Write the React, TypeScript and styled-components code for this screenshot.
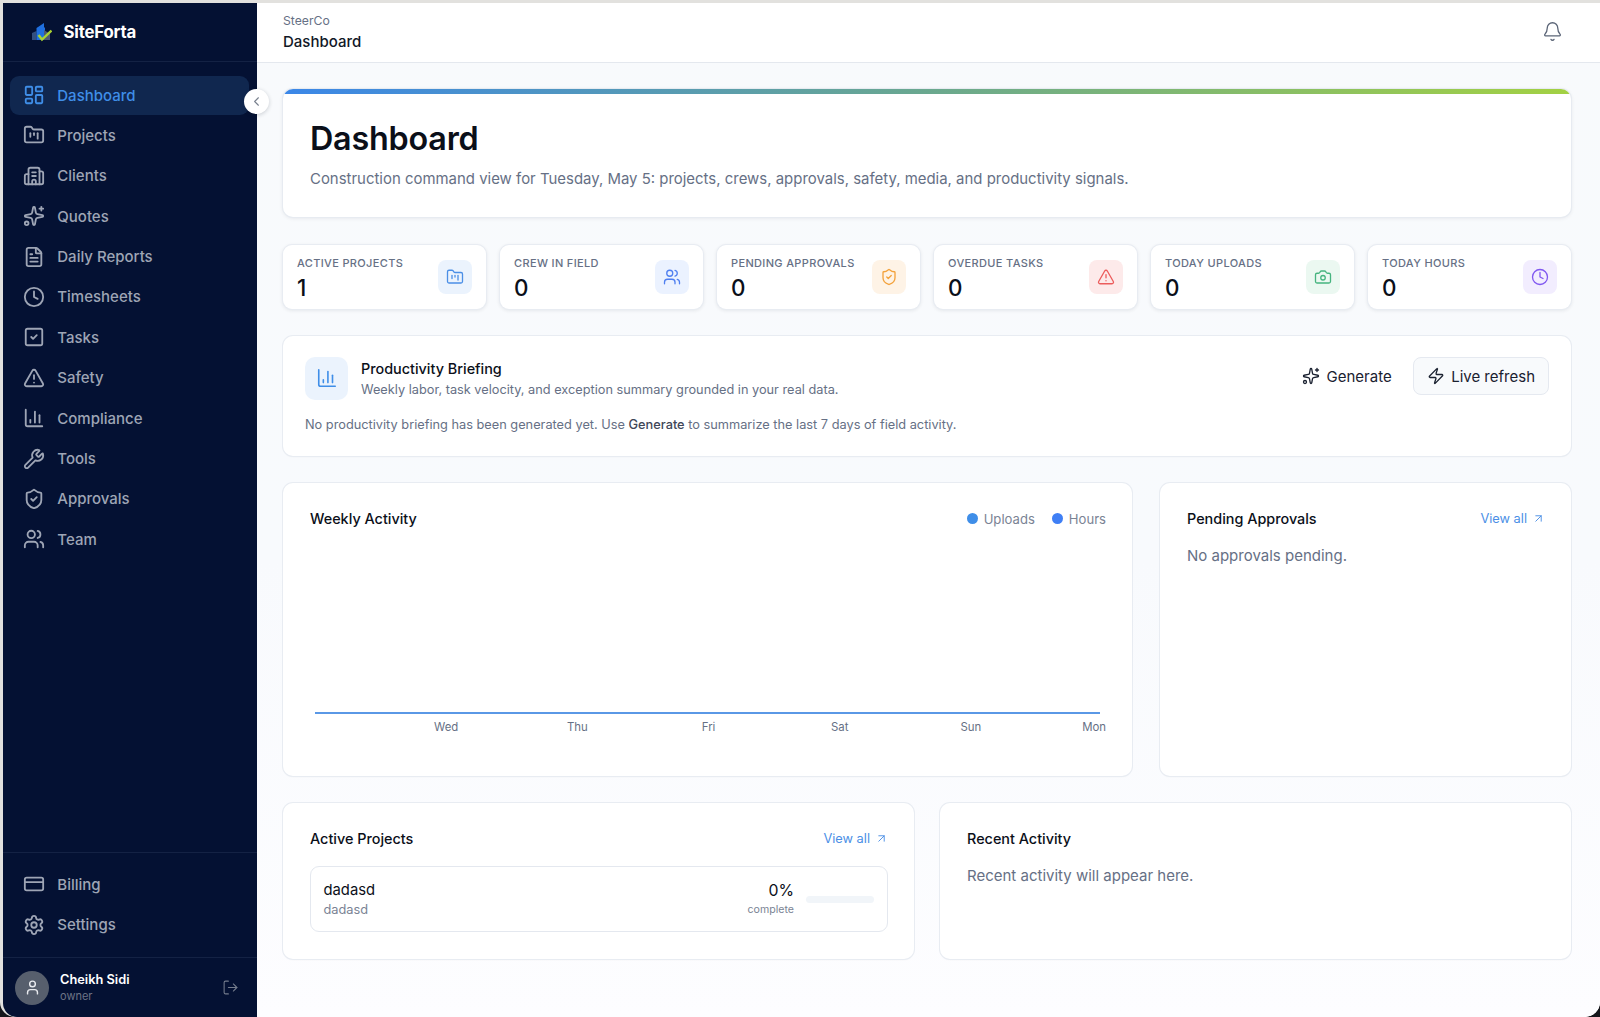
import React from "react";
import styled, { createGlobalStyle } from "styled-components";
import {
  LayoutDashboard, FolderKanban, Building2, Sparkles, FileText, Clock, SquareCheck,
  TriangleAlert, ChartColumn, Wrench, ShieldCheck, Users, CreditCard, Settings,
  LogOut, Bell, ChevronLeft, Camera, Zap, ArrowUpRight, User, LucideIcon,
} from "lucide-react";

const Global = createGlobalStyle`
  html, body { margin: 0; padding: 0; height: 100%; background: #15171c; }
  #root { height: 100%; }
  * { box-sizing: border-box; }
  body { font-family: Inter, "Noto Sans", "Liberation Sans", sans-serif; -webkit-font-smoothing: antialiased; }
`;

const Frame = styled.div`
  width: 1600px; height: 1017px; padding: 3px 0 0 3px; overflow: hidden;
  background: #e2e1de; border-radius: 0 0 15px 15px;
`;
const Shell = styled.div`
  display: flex; width: 100%; height: 100%; background: #fff;
  border-radius: 0 0 15px 14px; overflow: hidden; position: relative;
`;
const Sidebar = styled.aside`
  width: 254px; flex: none; background: #041133; display: flex; flex-direction: column; position: relative;
`;
const Brand = styled.div`
  height: 59px; flex: none; display: flex; align-items: center; gap: 11.5px; padding-left: 29px;
  border-bottom: 1px solid #142244;
`;
const BrandName = styled.span`
  color: #fff; font-size: 16.8px; font-weight: 700; letter-spacing: -0.2px;
`;
const NavList = styled.nav`
  flex: 1; display: flex; flex-direction: column; gap: 1.4px; padding: 13.5px 8px 0 7px;
`;
const NavItem = styled.div<{ $active?: boolean }>`
  height: 39px; flex: none; display: flex; align-items: center; gap: 12.8px; padding-left: 12.5px;
  border-radius: 9px; font-size: 15px; font-weight: 500;
  color: ${(p) => (p.$active ? "#3f8ee8" : "#9ea5b5")};
  background: ${(p) => (p.$active ? "#10274f" : "transparent")};
`;
const Collapse = styled.button`
  position: absolute; left: 241px; top: 86px; width: 25px; height: 25px; padding: 0; border: 0; border-radius: 50%;
  background: #fff; box-shadow: 0 1px 4px rgba(15, 23, 42, 0.2); color: #7a828f; z-index: 3;
  display: flex; align-items: center; justify-content: center;
`;
const NavFooter = styled.div`
  flex: none; display: flex; flex-direction: column; gap: 1.4px; padding: 12px 8px 13px 7px;
  border-top: 1px solid #142244;
`;
const UserBar = styled.div`
  flex: none; height: 60px; display: flex; align-items: center; padding: 0 18px 0 12px;
  border-top: 1px solid #142244;
`;
const Avatar = styled.div`
  width: 34px; height: 34px; border-radius: 50%; background: #575f6d; color: #e8eaee;
  display: flex; align-items: center; justify-content: center; flex: none;
`;
const UserInfo = styled.div`
  flex: 1; margin-left: 11px; display: flex; flex-direction: column; gap: 1px;
`;
const UserName = styled.div`
  color: #fff; font-size: 12.8px; font-weight: 600; line-height: 16px;
`;
const UserRole = styled.div`
  color: #6d7486; font-size: 11px; line-height: 14px;
`;
const LogoutBtn = styled.div`
  color: #747c8d; display: flex;
`;
const Column = styled.div`
  flex: 1; min-width: 0; display: flex; flex-direction: column;
  background: linear-gradient(180deg, #f8fafc 0%, #f8fafd 55%, #fdfdff 100%);
`;
const Topbar = styled.header`
  height: 60px; flex: none; background: #fff; border-bottom: 1px solid #e4e8ee;
  display: flex; align-items: center; justify-content: space-between; padding: 0 37px 2px 26px;
`;
const Crumbs = styled.div`
  display: flex; flex-direction: column; gap: 5px;
`;
const CrumbParent = styled.div`
  font-size: 12.2px; line-height: 15px; color: #667085;
`;
const CrumbCurrent = styled.div`
  font-size: 15px; line-height: 18px; font-weight: 500; color: #111827;
`;
const BellWrap = styled.div`
  color: #5b6577; display: flex;
`;
const Content = styled.main`
  flex: 1; display: flex; flex-direction: column; padding: 26px 29px 0 26px; min-height: 0;
`;
const Hero = styled.section`
  height: 128px; flex: none; margin-bottom: 28px; background: #fff; border-radius: 10px; overflow: hidden;
  box-shadow: 0 0 0 1px #e7ebf1, 0 1px 4px rgba(15, 23, 42, 0.1);
  display: flex; flex-direction: column;
`;
const HeroBar = styled.div`
  height: 5px; flex: none; background: linear-gradient(90deg, #3b87e8 0%, #6aa88f 50%, #a3d143 100%);
`;
const HeroBody = styled.div`
  padding: 25px 27px 0; display: flex; flex-direction: column; gap: 10px;
`;
const HeroTitle = styled.h1`
  margin: 0; font-size: 32.3px; line-height: 40px; font-weight: 600; color: #0b0f19; letter-spacing: -0.2px;
`;
const HeroSub = styled.p`
  margin: 0; font-size: 14.95px; line-height: 20px; color: #667085;
`;
const StatRow = styled.section`
  display: grid; grid-template-columns: repeat(6, 1fr); gap: 14px; flex: none; margin-bottom: 26.5px;
`;
const StatCard = styled.div`
  height: 64px; background: #fff; border-radius: 9px; padding: 11px 14px 0;
  box-shadow: 0 0 0 1px #e8ecf2, 0 1px 4px rgba(15, 23, 42, 0.12);
  display: flex; justify-content: space-between; align-items: flex-start;
`;
const StatText = styled.div`
  display: flex; flex-direction: column; gap: 3px;
`;
const StatLabel = styled.div`
  font-size: 11px; line-height: 15px; letter-spacing: 0.35px; font-weight: 500; color: #667085; text-transform: uppercase;
  white-space: nowrap;
`;
const StatValue = styled.div`
  font-size: 22.4px; line-height: 27px; font-weight: 500; color: #0b0f19;
`;
const StatIcon = styled.div<{ $bg: string; $fg: string }>`
  width: 34px; height: 34px; flex: none; margin-top: 4px; border-radius: 8px; background: ${(p) => p.$bg}; color: ${(p) => p.$fg};
  display: flex; align-items: center; justify-content: center;
`;
const Card = styled.section`
  background: #fff; border-radius: 10px; box-shadow: 0 0 0 1px #e8ecf2, 0 1px 2px rgba(15, 23, 42, 0.05);
`;
const Briefing = styled(Card)`
  height: 120px; flex: none; margin-bottom: 27px; padding: 21px 22px 0;
  display: flex; flex-direction: column; gap: 17px;
`;
const BriefTop = styled.div`
  display: flex; align-items: center; justify-content: space-between;
`;
const BriefLeft = styled.div`
  display: flex; align-items: center; gap: 13px;
`;
const BriefIcon = styled.div`
  width: 43px; height: 43px; border-radius: 10px; background: #ebf3fd; color: #3f8ee8;
  display: flex; align-items: center; justify-content: center;
`;
const BriefCopy = styled.div`
  display: flex; flex-direction: column; gap: 4px;
`;
const BriefTitle = styled.div`
  font-size: 14.4px; line-height: 19px; font-weight: 500; color: #0b0f19;
`;
const BriefSub = styled.div`
  font-size: 12.75px; line-height: 16px; color: #667085;
`;
const BriefActions = styled.div`
  display: flex; align-items: center; gap: 21px; margin-top: -4px;
`;
const GhostBtn = styled.div`
  display: flex; align-items: center; gap: 6.5px; font-size: 15px; color: #1a2130;
`;
const OutlineBtn = styled(GhostBtn)`
  height: 38px; padding: 0 13px; border: 1px solid #e5e9f0; border-radius: 8px; background: #f8fafc;
`;
const BriefNote = styled.p`
  margin: 0; font-size: 12.78px; line-height: 16px; color: #667085;
`;
const NoteStrong = styled.span`
  font-weight: 500; color: #3f4757;
`;
const ChartRow = styled.div`
  display: grid; grid-template-columns: 1fr 411px; gap: 28px; flex: none; margin-bottom: 27px;
`;
const Panel = styled(Card)`
  padding: 25.5px 26px 0 27px;
`;
const TallPanel = styled(Panel)`
  height: 293px; display: flex; flex-direction: column;
`;
const ShortPanel = styled(Panel)`
  height: 156px; display: flex; flex-direction: column;
`;
const PanelHead = styled.div`
  height: 21px; flex: none; display: flex; align-items: center; justify-content: space-between;
`;
const PanelTitle = styled.h2`
  margin: 0; font-size: 14.4px; line-height: 20px; font-weight: 500; color: #0b0f19;
`;
const Legend = styled.div`
  display: flex; gap: 17px;
`;
const LegendItem = styled.div`
  display: flex; align-items: center; gap: 6px; font-size: 13.1px; color: #7a8394;
`;
const Dot = styled.span<{ $c: string }>`
  width: 11px; height: 11px; border-radius: 50%; background: ${(p) => p.$c};
`;
const Chart = styled.div`
  flex: 1; display: flex; flex-direction: column; justify-content: flex-end; padding-bottom: 42px;
`;
const ChartLine = styled.div`
  height: 2px; margin: 0 6px 0 5px; background: #5a98e6;
`;
const Axis = styled.div`
  display: grid; grid-template-columns: repeat(5, 131.2px) 1fr; padding: 6px 0 0 70.6px;
  font-size: 11.4px; line-height: 14px; color: #667085; text-align: center;
`;
const AxisDay = styled.span`
  &:last-child { text-align: right; }
`;
const ViewAll = styled.div`
  display: flex; align-items: center; gap: 5px; font-size: 12.8px; color: #4b8fe6;
`;
const Empty = styled.p`
  margin: 17px 0 0; font-size: 15px; line-height: 20px; color: #667085;
`;
const BottomRow = styled.div`
  display: grid; grid-template-columns: 1fr 1fr; gap: 26px; flex: none;
`;
const ProjectRow = styled.div`
  margin-top: 17px; height: 66px; border: 1px solid #e4e8ef; border-radius: 9px;
  display: flex; align-items: center; justify-content: space-between; padding: 0 13px 0 12.5px;
`;
const ProjectCopy = styled.div`
  display: flex; flex-direction: column; gap: 1.5px;
`;
const ProjectName = styled.div`
  font-size: 14.8px; line-height: 20px; font-weight: 400; color: #0b0f19;
`;
const ProjectSub = styled.div`
  font-size: 12.8px; line-height: 17px; color: #7a8394;
`;
const ProgressWrap = styled.div`
  display: flex; align-items: center; gap: 12px;
`;
const Percent = styled.div`
  display: flex; flex-direction: column; align-items: flex-end; gap: 1px;
`;
const PercentValue = styled.div`
  font-size: 15.8px; line-height: 20px; color: #0b0f19;
`;
const PercentLabel = styled.div`
  font-size: 10.6px; line-height: 15px; color: #7a8394;
`;
const Track = styled.div`
  width: 68px; height: 7px; border-radius: 4px; background: #f1f5f9;
`;

const Logo = () => (
  <svg width="20" height="19" viewBox="0 0 20 19" aria-hidden="true">
    <path d="M0 10 L4.5 8 V17 H0 Z" fill="#34507f" />
    <path d="M4.5 5 L12 0 V4 L13 5 V17 H4.5 Z" fill="#1f6fe0" />
    <path d="M12 7 L18 11 V17 H12 Z" fill="#4d5872" />
    <path d="M6.5 12 L10 16.5 L19.5 7.5" stroke="#a8d132" strokeWidth="2.4" fill="none" />
  </svg>
);

const mainNav: [LucideIcon, string][] = [
  [FolderKanban, "Projects"],
  [Building2, "Clients"],
  [Sparkles, "Quotes"],
  [FileText, "Daily Reports"],
  [Clock, "Timesheets"],
  [SquareCheck, "Tasks"],
  [TriangleAlert, "Safety"],
  [ChartColumn, "Compliance"],
  [Wrench, "Tools"],
  [ShieldCheck, "Approvals"],
  [Users, "Team"],
];

const stats: { label: string; value: string; Icon: LucideIcon; bg: string; fg: string }[] = [
  { label: "Active Projects", value: "1", Icon: FolderKanban, bg: "#ebf3fd", fg: "#4b8fe6" },
  { label: "Crew in Field", value: "0", Icon: Users, bg: "#ebf2ff", fg: "#4f7ff0" },
  { label: "Pending Approvals", value: "0", Icon: ShieldCheck, bg: "#fef3e6", fg: "#f3a23c" },
  { label: "Overdue Tasks", value: "0", Icon: TriangleAlert, bg: "#fdeaea", fg: "#ec5c5c" },
  { label: "Today Uploads", value: "0", Icon: Camera, bg: "#ebf8f1", fg: "#46b47f" },
  { label: "Today Hours", value: "0", Icon: Clock, bg: "#f2edfe", fg: "#8058f0" },
];

const days = ["Wed", "Thu", "Fri", "Sat", "Sun", "Mon"];

export default function App() {
  return (
    <>
      <Global />
      <Frame>
        <Shell>
          <Sidebar>
            <Brand>
              <Logo />
              <BrandName>SiteForta</BrandName>
            </Brand>
            <Collapse aria-label="Collapse"><ChevronLeft size={15} strokeWidth={1.75} /></Collapse>
            <NavList>
              <NavItem $active><LayoutDashboard size={22} strokeWidth={2} />Dashboard</NavItem>
              {mainNav.map(([Icon, label]) => (
                <NavItem key={label}><Icon size={22} strokeWidth={2} />{label}</NavItem>
              ))}
            </NavList>
            <NavFooter>
              <NavItem><CreditCard size={22} strokeWidth={2} />Billing</NavItem>
              <NavItem><Settings size={22} strokeWidth={2} />Settings</NavItem>
            </NavFooter>
            <UserBar>
              <Avatar><User size={17} strokeWidth={2} /></Avatar>
              <UserInfo>
                <UserName>Cheikh Sidi</UserName>
                <UserRole>owner</UserRole>
              </UserInfo>
              <LogoutBtn><LogOut size={17} strokeWidth={1.5} /></LogoutBtn>
            </UserBar>
          </Sidebar>
          <Column>
            <Topbar>
              <Crumbs>
                <CrumbParent>SteerCo</CrumbParent>
                <CrumbCurrent>Dashboard</CrumbCurrent>
              </Crumbs>
              <BellWrap><Bell size={21} strokeWidth={1.5} /></BellWrap>
            </Topbar>
            <Content>
              <Hero>
                <HeroBar />
                <HeroBody>
                  <HeroTitle>Dashboard</HeroTitle>
                  <HeroSub>Construction command view for Tuesday, May 5: projects, crews, approvals, safety, media, and productivity signals.</HeroSub>
                </HeroBody>
              </Hero>
              <StatRow>
                {stats.map(({ label, value, Icon, bg, fg }) => (
                  <StatCard key={label}>
                    <StatText>
                      <StatLabel>{label}</StatLabel>
                      <StatValue>{value}</StatValue>
                    </StatText>
                    <StatIcon $bg={bg} $fg={fg}><Icon size={18} strokeWidth={1.75} /></StatIcon>
                  </StatCard>
                ))}
              </StatRow>
              <Briefing>
                <BriefTop>
                  <BriefLeft>
                    <BriefIcon><ChartColumn size={22} strokeWidth={1.75} /></BriefIcon>
                    <BriefCopy>
                      <BriefTitle>Productivity Briefing</BriefTitle>
                      <BriefSub>Weekly labor, task velocity, and exception summary grounded in your real data.</BriefSub>
                    </BriefCopy>
                  </BriefLeft>
                  <BriefActions>
                    <GhostBtn><Sparkles size={18} strokeWidth={1.75} />Generate</GhostBtn>
                    <OutlineBtn><Zap size={18} strokeWidth={1.75} />Live refresh</OutlineBtn>
                  </BriefActions>
                </BriefTop>
                <BriefNote>No productivity briefing has been generated yet. Use <NoteStrong>Generate</NoteStrong> to summarize the last 7 days of field activity.</BriefNote>
              </Briefing>
              <ChartRow>
                <TallPanel>
                  <PanelHead>
                    <PanelTitle>Weekly Activity</PanelTitle>
                    <Legend>
                      <LegendItem><Dot $c="#3f8ee8" />Uploads</LegendItem>
                      <LegendItem><Dot $c="#3f7ff5" />Hours</LegendItem>
                    </Legend>
                  </PanelHead>
                  <Chart>
                    <ChartLine />
                    <Axis>
                      {days.map((d) => <AxisDay key={d}>{d}</AxisDay>)}
                    </Axis>
                  </Chart>
                </TallPanel>
                <TallPanel>
                  <PanelHead>
                    <PanelTitle>Pending Approvals</PanelTitle>
                    <ViewAll>View all <ArrowUpRight size={13} strokeWidth={1.75} /></ViewAll>
                  </PanelHead>
                  <Empty>No approvals pending.</Empty>
                </TallPanel>
              </ChartRow>
              <BottomRow>
                <ShortPanel>
                  <PanelHead>
                    <PanelTitle>Active Projects</PanelTitle>
                    <ViewAll>View all <ArrowUpRight size={13} strokeWidth={1.75} /></ViewAll>
                  </PanelHead>
                  <ProjectRow>
                    <ProjectCopy>
                      <ProjectName>dadasd</ProjectName>
                      <ProjectSub>dadasd</ProjectSub>
                    </ProjectCopy>
                    <ProgressWrap>
                      <Percent>
                        <PercentValue>0%</PercentValue>
                        <PercentLabel>complete</PercentLabel>
                      </Percent>
                      <Track />
                    </ProgressWrap>
                  </ProjectRow>
                </ShortPanel>
                <ShortPanel>
                  <PanelHead>
                    <PanelTitle>Recent Activity</PanelTitle>
                  </PanelHead>
                  <Empty>Recent activity will appear here.</Empty>
                </ShortPanel>
              </BottomRow>
            </Content>
          </Column>
        </Shell>
      </Frame>
    </>
  );
}
